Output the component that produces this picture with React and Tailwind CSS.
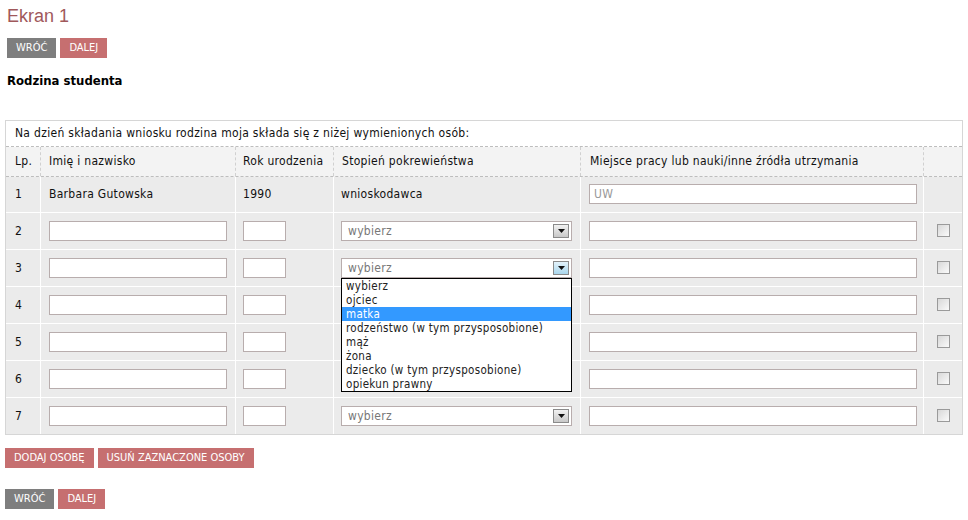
import { Fragment } from 'react';

const options = [
  'wybierz',
  'ojciec',
  'matka',
  'rodzeństwo (w tym przysposobione)',
  'mąż',
  'żona',
  'dziecko (w tym przysposobione)',
  'opiekun prawny',
];

const Btn = ({ gray, children }) => (
  <button
    className={`h-[20px] px-[9px] text-[11px] leading-[20px] tracking-normal uppercase text-white ${gray ? 'bg-[#7e7e7e]' : 'bg-[#c66f70]'}`}
  >
    {children}
  </button>
);

const Input = ({ w, value }) => (
  <div className={`${w} flex h-[20px] items-center border border-[#b8adad] bg-white pl-[4px] text-[#999]`}>
    {value}
  </div>
);

const Select = ({ active }) => (
  <div className="flex h-[20px] w-[231px] items-center justify-between border border-[#b8adad] bg-white pr-[2px] pl-[6px] text-[#777]">
    <span>wybierz</span>
    <span
      className={`flex h-[14px] w-[16px] items-center justify-center border border-[#8a8a8a] ${active ? 'bg-gradient-to-b from-[#e3f3fb] to-[#a9d6ec]' : 'bg-gradient-to-b from-[#f2f2f2] to-[#c8c8c8]'}`}
    >
      <svg width="7" height="4" viewBox="0 0 7 4">
        <path d="M0 0h7L3.5 4z" fill="#111" />
      </svg>
    </span>
  </div>
);

const Check = () => (
  <span className="block h-[13px] w-[13px] border border-[#9a9a9a] bg-gradient-to-br from-[#d8d8d8] to-[#fafafa]" />
);

const Row = ({ n, first, open }) => (
  <div className={`flex ${first ? 'h-[35px]' : 'h-[37px] border-t border-white'} bg-[#ebebeb] text-[#111]`}>
    <div className="flex w-[34px] items-center pl-[9px]">{n}</div>
    <div className="flex w-[195px] items-center border-l border-white pl-[8px]">
      {first ? 'Barbara Gutowska' : <Input w="w-[178px]" />}
    </div>
    <div className="flex w-[98px] items-center border-l border-white pl-[7px]">
      {first ? '1990' : <Input w="w-[43px]" />}
    </div>
    <div className="relative flex w-[247px] items-center border-l border-white pl-[7px]">
      {first ? 'wnioskodawca' : <Select active={open} />}
      {open && (
        <div className="absolute top-[28px] left-[7px] z-10 w-[231px] border border-black bg-white text-[11.5px] leading-[14px] text-[#222]">
          {options.map((o) => (
            <div key={o} className={`h-[14px] pl-[4px] ${o === 'matka' ? 'bg-[#3399ff] text-white' : ''}`}>
              {o}
            </div>
          ))}
        </div>
      )}
    </div>
    <div className="flex w-[343px] items-center border-l border-white pl-[8px]">
      <Input w="w-[328px]" value={first ? 'UW' : ''} />
    </div>
    <div className="flex flex-1 items-center justify-center border-l border-white">{!first && <Check />}</div>
  </div>
);

export default function App() {
  return (
    <div className="min-h-[520px] bg-white px-[5px] pt-[5px] font-['DejaVu_Sans_Condensed','DejaVu_Sans',sans-serif] text-[12px] tracking-[0.3px]">
      <h1 className="pl-[2px] font-['Liberation_Sans',Arial,sans-serif] text-[18px] leading-[22px] tracking-normal text-[#a0585b]">
        Ekran 1
      </h1>
      <div className="mt-[11px] flex gap-[4px] pl-[2px]">
        <Btn gray>Wróć</Btn>
        <Btn>Dalej</Btn>
      </div>
      <h2 className="mt-[13px] pl-[2px] text-[13px] font-bold tracking-normal text-black">Rodzina studenta</h2>

      <div className="mt-[29px] border border-[#d6d6d6]">
        <div className="flex h-[26px] items-center border-b border-dashed border-[#bdbdbd] pl-[9px] text-[#111]">
          Na dzień składania wniosku rodzina moja składa się z niżej wymienionych osób:
        </div>
        <div className="flex h-[30px] border-b border-dashed border-[#bdbdbd] bg-[#f3f3f3] text-[#111]">
          <div className="flex w-[34px] items-center pl-[9px]">Lp.</div>
          <div className="flex w-[195px] items-center border-l border-dashed border-[#d0d0d0] pl-[8px]">Imię i nazwisko</div>
          <div className="flex w-[98px] items-center border-l border-dashed border-[#d0d0d0] pl-[7px]">Rok urodzenia</div>
          <div className="flex w-[247px] items-center border-l border-dashed border-[#d0d0d0] pl-[8px]">Stopień pokrewieństwa</div>
          <div className="flex w-[343px] items-center border-l border-dashed border-[#d0d0d0] pl-[9px]">
            Miejsce pracy lub nauki/inne źródła utrzymania
          </div>
          <div className="flex-1 border-l border-dashed border-[#d0d0d0]" />
        </div>
        {[1, 2, 3, 4, 5, 6, 7].map((n) => (
          <Fragment key={n}>
            <Row n={n} first={n === 1} open={n === 3} />
          </Fragment>
        ))}
      </div>

      <div className="mt-[13px] flex gap-[4px]">
        <Btn>Dodaj osobę</Btn>
        <Btn>Usuń zaznaczone osoby</Btn>
      </div>
      <div className="mt-[21px] flex gap-[4px]">
        <Btn gray>Wróć</Btn>
        <Btn>Dalej</Btn>
      </div>
    </div>
  );
}
